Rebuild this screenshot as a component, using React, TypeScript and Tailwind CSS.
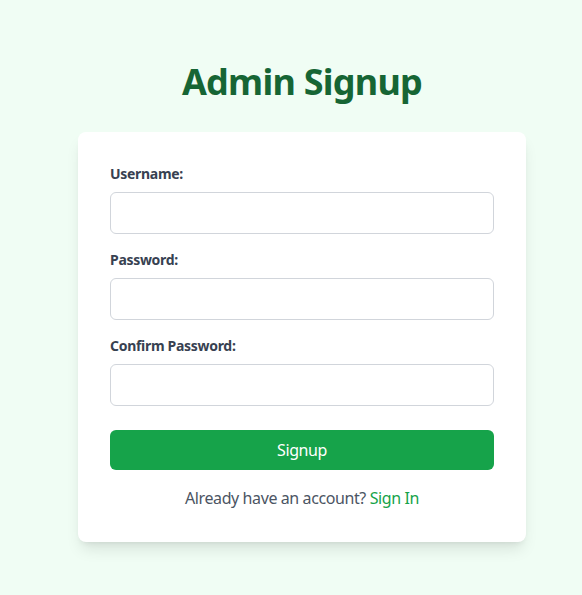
export default function App() {
  return (
    <div className="min-h-screen bg-[#f0fdf4] flex flex-col items-center justify-center pl-[22px] pt-[8px]" style={{ fontFamily: '"Noto Sans", "Open Sans", sans-serif' }}>
      <h1 className="text-4xl font-bold text-[#166534] mb-[30px] tracking-[-0.75px]">Admin Signup</h1>
      <div className="w-[448px] bg-white rounded-lg shadow-lg p-8">
        <div className="mb-4">
          <label className="block text-sm font-bold text-[#374151] mb-2 tracking-[-0.3px]">Username:</label>
          <input className="w-full border border-[#d1d5db] rounded-md px-3 py-2 text-base" />
        </div>
        <div className="mb-4">
          <label className="block text-sm font-bold text-[#374151] mb-2 tracking-[-0.3px]">Password:</label>
          <input type="password" className="w-full border border-[#d1d5db] rounded-md px-3 py-2 text-base" />
        </div>
        <div className="mb-6">
          <label className="block text-sm font-bold text-[#374151] mb-2 tracking-[-0.3px]">Confirm Password:</label>
          <input type="password" className="w-full border border-[#d1d5db] rounded-md px-3 py-2 text-base" />
        </div>
        <button className="w-full bg-[#16a34a] text-white rounded-md py-2 text-base tracking-[-0.4px]">Signup</button>
        <p className="mt-4 text-center text-[#4b5563] text-base tracking-[-0.4px]">
          Already have an account? <a className="text-[#16a34a]">Sign In</a>
        </p>
      </div>
    </div>
  );
}
